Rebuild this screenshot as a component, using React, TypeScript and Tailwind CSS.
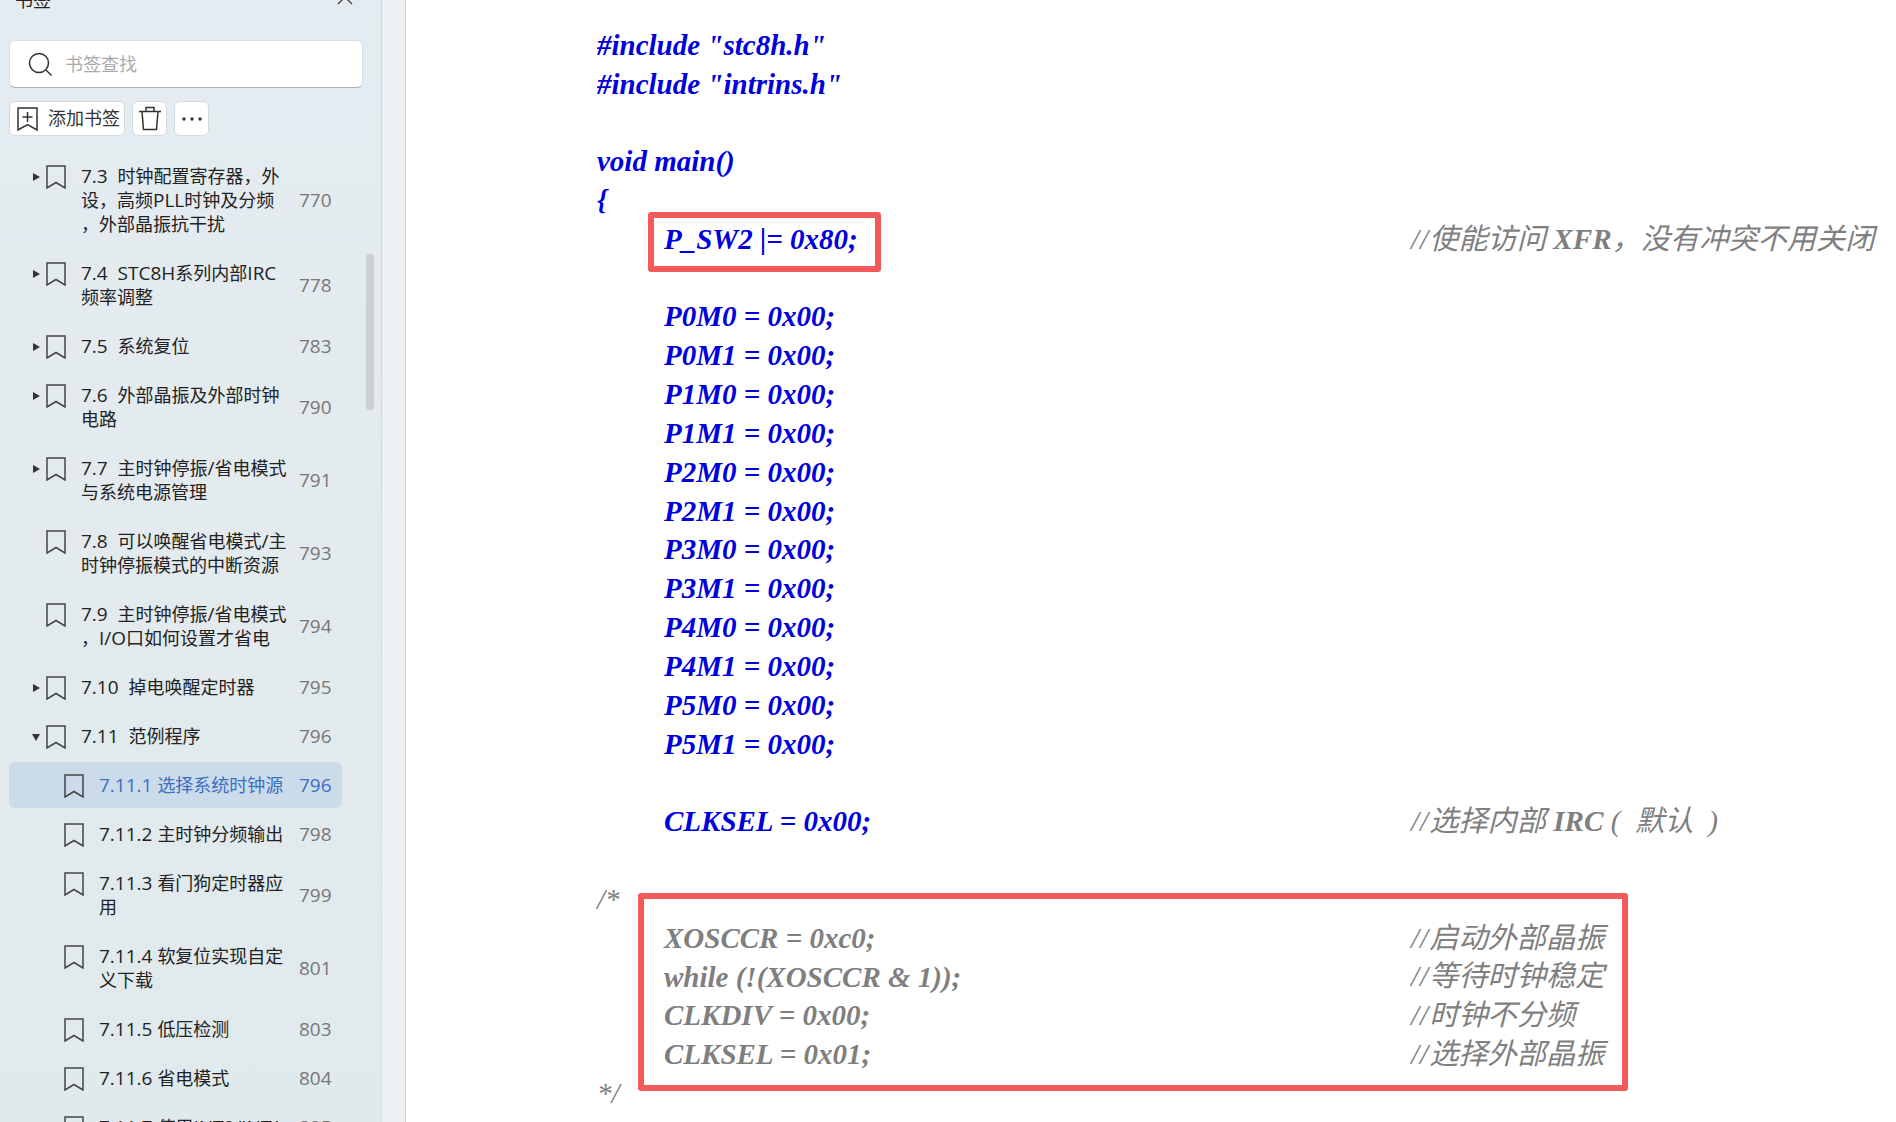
type TreeItem = {
  lines: string[];
  page: number;
  level: 1 | 2;
  arrow?: "right" | "down";
  active?: boolean;
};

const treeItems: TreeItem[] = [
  { lines: ["7.3  时钟配置寄存器，外", "设，高频PLL时钟及分频", "，外部晶振抗干扰"], page: 770, level: 1, arrow: "right" },
  { lines: ["7.4  STC8H系列内部IRC", "频率调整"], page: 778, level: 1, arrow: "right" },
  { lines: ["7.5  系统复位"], page: 783, level: 1, arrow: "right" },
  { lines: ["7.6  外部晶振及外部时钟", "电路"], page: 790, level: 1, arrow: "right" },
  { lines: ["7.7  主时钟停振/省电模式", "与系统电源管理"], page: 791, level: 1, arrow: "right" },
  { lines: ["7.8  可以唤醒省电模式/主", "时钟停振模式的中断资源"], page: 793, level: 1 },
  { lines: ["7.9  主时钟停振/省电模式", "，I/O口如何设置才省电"], page: 794, level: 1 },
  { lines: ["7.10  掉电唤醒定时器"], page: 795, level: 1, arrow: "right" },
  { lines: ["7.11  范例程序"], page: 796, level: 1, arrow: "down" },
  { lines: ["7.11.1 选择系统时钟源"], page: 796, level: 2, active: true },
  { lines: ["7.11.2 主时钟分频输出"], page: 798, level: 2 },
  { lines: ["7.11.3 看门狗定时器应", "用"], page: 799, level: 2 },
  { lines: ["7.11.4 软复位实现自定", "义下载"], page: 801, level: 2 },
  { lines: ["7.11.5 低压检测"], page: 803, level: 2 },
  { lines: ["7.11.6 省电模式"], page: 804, level: 2 },
  { lines: ["7.11.7 使用INT0/INT1"], page: 805, level: 2 },
];

type CommentPart = { text: string; bold?: boolean };

type CodeLine = {
  code?: string;
  indent?: boolean;
  tone?: "blue" | "gray" | "thin";
  comment?: CommentPart[];
};

const regs = ["P0M0", "P0M1", "P1M0", "P1M1", "P2M0", "P2M1", "P3M0", "P3M1", "P4M0", "P4M1", "P5M0", "P5M1"];

const codeLines: CodeLine[] = [
  { code: '#include "stc8h.h"' },
  { code: '#include "intrins.h"' },
  {},
  { code: "void main()" },
  { code: "{" },
  {
    code: "P_SW2 |= 0x80;",
    indent: true,
    comment: [{ text: "使能访问 " }, { text: "XFR", bold: true }, { text: "，没有冲突不用关闭" }],
  },
  {},
  ...regs.map((r): CodeLine => ({ code: `${r} = 0x00;`, indent: true })),
  {},
  {
    code: "CLKSEL = 0x00;",
    indent: true,
    comment: [{ text: "选择内部 " }, { text: "IRC", bold: true }, { text: " (  默认  )" }],
  },
  {},
  { code: "/*", tone: "thin" },
  { code: "XOSCCR = 0xc0;", indent: true, tone: "gray", comment: [{ text: "启动外部晶振" }] },
  { code: "while (!(XOSCCR & 1));", indent: true, tone: "gray", comment: [{ text: "等待时钟稳定" }] },
  { code: "CLKDIV = 0x00;", indent: true, tone: "gray", comment: [{ text: "时钟不分频" }] },
  { code: "CLKSEL = 0x01;", indent: true, tone: "gray", comment: [{ text: "选择外部晶振" }] },
  { code: "*/", tone: "thin" },
];

function BookmarkIcon() {
  return (
    <svg width="20" height="24" viewBox="0 0 20 24" fill="none" className="shrink-0 mt-[1px] mb-[-1px]">
      <path d="M1 1H19V23L10 17.5L1 23Z" stroke="#444" strokeWidth="1.5" strokeLinejoin="miter" />
    </svg>
  );
}

function Arrow({ dir }: { dir?: "right" | "down" }) {
  if (!dir) return <span className="w-2 shrink-0" />;
  return (
    <svg width="8" height="8" viewBox="0 0 8 8" className="shrink-0 mt-[9px]" fill="#333">
      {dir === "right" ? <path d="M1 0L8 4L1 8Z" /> : <path d="M0 1H8L4 8Z" />}
    </svg>
  );
}

// latin runs sit a touch larger than the cjk around them
function MixedLine({ text }: { text: string }) {
  const runs = text.match(/[\x00-\x7f]+|[^\x00-\x7f]+/g) ?? [];
  return (
    <div>
      {runs.map((run, i) =>
        /^[\x00-\x7f]/.test(run) ? (
          <span key={i} className="text-[19px]">
            {run}
          </span>
        ) : (
          <span key={i}>{run}</span>
        ),
      )}
    </div>
  );
}

function TreeRow({ item }: { item: TreeItem }) {
  return (
    <div
      className={`flex items-stretch w-[333px] rounded-md py-[11px] mb-[3px] shrink-0 ${
        item.active ? "bg-[#ccdbea]" : ""
      }`}
    >
      <div className={`flex items-start shrink-0 ${item.level === 1 ? "pl-[23px] w-[72px]" : "pl-[55px] w-[90px]"}`}>
        {item.level === 1 && <Arrow dir={item.arrow} />}
        {item.level === 1 && <span className="w-[6px] shrink-0" />}
        <BookmarkIcon />
      </div>
      <div className={`flex-1 text-[18px] leading-[24px] whitespace-pre ${item.active ? "text-[#3a6fc4]" : "text-[#222]"}`}>
        {item.lines.map((line) => (
          <MixedLine key={line} text={line} />
        ))}
      </div>
      <div className={`w-[43px] shrink-0 flex items-center text-[19px] leading-[24px] ${item.active ? "text-[#3a6fc4]" : "text-[#777]"}`}>
        {item.page}
      </div>
    </div>
  );
}

function Sidebar() {
  return (
    <aside className="relative w-[381px] h-full shrink-0 overflow-hidden bg-gradient-to-b from-[#e5ecf1] to-[#e0e9ec] font-['Open_Sans','Noto_Sans_CJK_SC',sans-serif]">
      <div className="flex items-center justify-between h-[24px] mt-[-12px] pl-[15px] pr-[28px] text-[18px] text-[#222]">
        <span>书签</span>
        <svg width="16" height="16" viewBox="0 0 16 16" fill="none" stroke="#444" strokeWidth="1.4" className="mt-[-6px]">
          <path d="M1 1L15 15M15 1L1 15" />
        </svg>
      </div>

      <div className="flex items-center h-[48px] w-[354px] ml-[9px] mt-[28px] rounded-md bg-white border border-[#d9dee1] border-b-[#aeb3b6] pl-[18px] text-[18px] text-[#aaa]">
        <svg width="24" height="24" viewBox="0 0 24 24" fill="none" stroke="#333" strokeWidth="1.5" className="mr-[13px]">
          <circle cx="11" cy="11" r="9.5" />
          <path d="M18 18L23.5 23.5" />
        </svg>
        书签查找
      </div>

      <div className="flex gap-[7px] ml-[9px] mt-[13px] h-[35px] text-[#333]">
        <div className="flex items-center w-[116px] rounded-md bg-white border border-[#d5dadd] pl-[7px] text-[18px]">
          <svg width="21" height="24" viewBox="0 0 21 24" fill="none" stroke="#333" strokeWidth="1.5" className="mr-[10px] shrink-0">
            <path d="M1 1H20V23L10.5 17.5L1 23Z" />
            <path d="M10.5 5V15M5.5 10H15.5" />
          </svg>
          <span className="whitespace-nowrap">添加书签</span>
        </div>
        <div className="flex items-center justify-center w-[35px] rounded-md bg-white border border-[#d5dadd]">
          <svg width="24" height="25" viewBox="0 0 24 25" fill="none" stroke="#333" strokeWidth="1.5">
            <path d="M1 5.5H23M8 5.5V1.5H16V5.5M4 5.5L5.5 23.5H18.5L20 5.5" />
          </svg>
        </div>
        <div className="flex items-center justify-center w-[35px] rounded-md bg-white border border-[#d5dadd]">
          <svg width="20" height="4" viewBox="0 0 20 4" fill="#333">
            <circle cx="2" cy="2" r="1.7" />
            <circle cx="10" cy="2" r="1.7" />
            <circle cx="18" cy="2" r="1.7" />
          </svg>
        </div>
      </div>

      <div className="flex flex-col ml-[9px] mt-[17px]">
        {treeItems.map((item) => (
          <TreeRow key={item.lines[0]} item={item} />
        ))}
      </div>

      {/* scrollbar thumb */}
      <div className="absolute left-[366px] top-[254px] w-[8px] h-[156px] rounded bg-[#c9cfd3]" />
    </aside>
  );
}

function Code() {
  return (
    <main className="relative flex-1 h-full overflow-hidden bg-white pl-[191px] pt-[26px] font-['Liberation_Serif','Noto_Sans_CJK_SC',serif] text-[29px] italic">
      {codeLines.map((line, i) => (
        <div key={i} className="flex h-[38.84px] items-center whitespace-pre">
          <div
            className={`w-[814px] shrink-0 ${line.indent ? "pl-[67px]" : ""} ${
              line.tone === "gray"
                ? "font-bold text-[#7f7f7f]"
                : line.tone === "thin"
                  ? "text-[#7f7f7f]"
                  : "font-bold text-[#0000dd]"
            }`}
          >
            {line.code}
          </div>
          {line.comment && (
            <div className="text-[#7f7f7f] text-[29.2px]">
              <span className="font-normal tracking-[1px]">//</span>
              {line.comment.map((part) => (
                <span key={part.text} className={part.bold ? "font-bold" : "font-normal"}>
                  {part.text}
                </span>
              ))}
            </div>
          )}
        </div>
      ))}

      {/* red highlight frames */}
      <div className="absolute left-[242px] top-[212px] w-[233px] h-[60px] rounded-[3px] border-[6px] border-[#f55a5a]" />
      <div className="absolute left-[232px] top-[893px] w-[990px] h-[198px] rounded-[3px] border-[6px] border-[#f55a5a]" />
    </main>
  );
}

export default function App() {
  return (
    <div className="flex w-[1896px] h-[1122px] overflow-hidden">
      <Sidebar />
      <div className="w-[25px] h-full shrink-0 bg-[#eef1f3] border-l border-l-[#d5dadd] border-r border-r-[#cfd3d6]" />
      <Code />
    </div>
  );
}
